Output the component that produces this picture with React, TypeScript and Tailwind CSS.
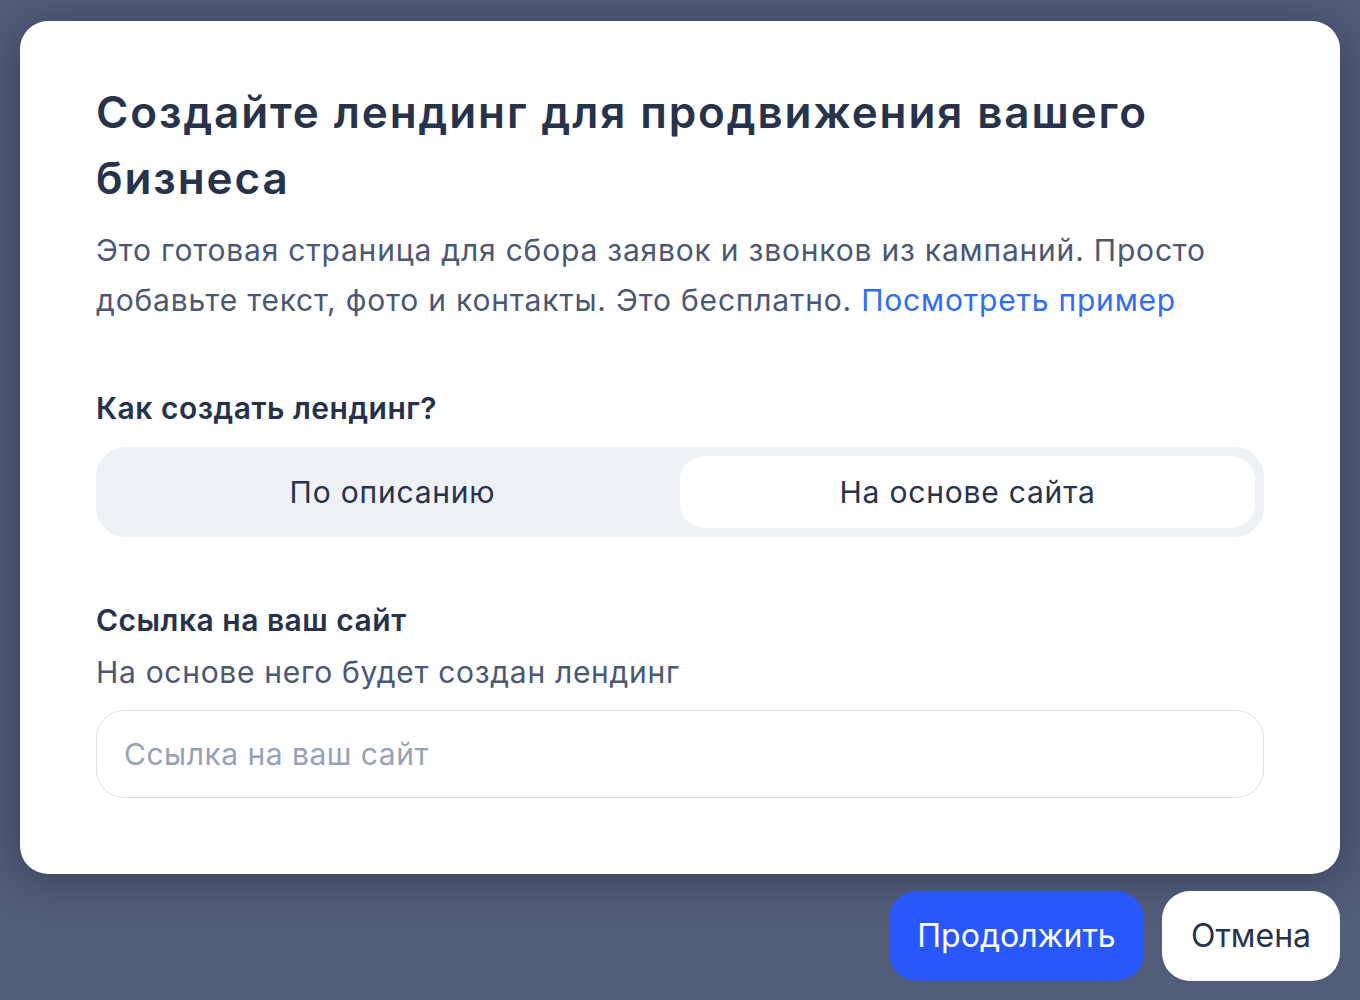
const font = { fontFamily: 'Inter, "Noto Sans", Arial, sans-serif' };

export default function App() {
  return (
    <div
      className="flex h-[1000px] w-[1360px] flex-col bg-[#525d79] px-[20px] pt-[21px] text-[#26324b]"
      style={font}
    >
      <div className="flex h-[853px] flex-col rounded-[28px] bg-white px-[76px] pt-[58px] shadow-[0_4px_40px_rgba(20,26,44,0.45)]">
        <h1 className="text-[44px] font-semibold leading-[66px] tracking-[1.9px] text-[#27324b]">
          Создайте лендинг для продвижения вашего бизнеса
        </h1>
        <p className="mt-[14px] text-[30px] leading-[50px] tracking-[0.8px] text-[#4c5773]">
          Это готовая страница для сбора заявок и звонков из кампаний. Просто
          добавьте текст, фото и контакты. Это бесплатно.{" "}
          <a className="text-[#2f6df6]" href="#">
            Посмотреть пример
          </a>
        </p>

        <h2 className="mt-[61px] text-[30px] font-semibold leading-[45px] tracking-[0.5px]">
          Как создать лендинг?
        </h2>
        <div className="mt-[16px] flex h-[90px] rounded-[30px] bg-[#eef1f6] p-[9px]">
          <button className="flex-1 text-[30px] tracking-[0.8px] text-[#27324b]">
            По описанию
          </button>
          <button className="flex-1 rounded-[24px] bg-white text-[30px] tracking-[0.8px] text-[#27324b]">
            На основе сайта
          </button>
        </div>

        <h2 className="mt-[61px] text-[30px] font-semibold leading-[45px] tracking-[0.5px]">
          Ссылка на ваш сайт
        </h2>
        <p className="mt-[4px] text-[30px] leading-[50px] tracking-[0.7px] text-[#4c5773]">
          На основе него будет создан лендинг
        </p>
        <input
          className="mt-[13px] h-[88px] rounded-[28px] border border-[#d9dee7] px-[27px] text-[30px] tracking-[0.5px] placeholder:text-[#97a1b7] focus:outline-none"
          placeholder="Ссылка на ваш сайт"
          type="text"
        />
      </div>

      <div className="mt-[17px] flex justify-end gap-[18px]">
        <button className="h-[90px] w-[255px] rounded-[28px] bg-[#2857fb] text-[32px] text-white">
          Продолжить
        </button>
        <button className="h-[90px] w-[178px] rounded-[28px] bg-white text-[32px] text-[#27324b]">
          Отмена
        </button>
      </div>
    </div>
  );
}
